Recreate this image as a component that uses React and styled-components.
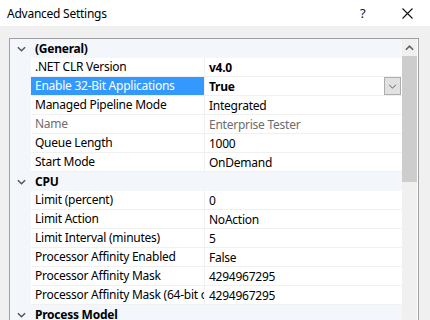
import React from 'react';
import styled, { createGlobalStyle } from 'styled-components';

const GlobalStyle = createGlobalStyle`
  html, body {
    margin: 0;
    padding: 0;
    width: 430px;
    height: 320px;
    overflow: hidden;
    background: #f0f0f0;
    font-family: "Noto Sans", "Open Sans", sans-serif;
    font-size: 12px;
    letter-spacing: -0.25px;
    color: #000;
  }
`;

const sections = [
  {
    title: '(General)',
    items: [
      { name: '.NET CLR Version', value: 'v4.0', bold: true },
      { name: 'Enable 32-Bit Applications', value: 'True', bold: true, selected: true },
      { name: 'Managed Pipeline Mode', value: 'Integrated' },
      { name: 'Name', value: 'Enterprise Tester', disabled: true },
      { name: 'Queue Length', value: '1000' },
      { name: 'Start Mode', value: 'OnDemand' },
    ],
  },
  {
    title: 'CPU',
    items: [
      { name: 'Limit (percent)', value: '0' },
      { name: 'Limit Action', value: 'NoAction' },
      { name: 'Limit Interval (minutes)', value: '5' },
      { name: 'Processor Affinity Enabled', value: 'False' },
      { name: 'Processor Affinity Mask', value: '4294967295' },
      { name: 'Processor Affinity Mask (64-bit option)', value: '4294967295' },
    ],
  },
  { title: 'Process Model', items: [] },
];

const Chevron = () => (
  <svg width="9" height="6" viewBox="0 0 10 6">
    <path d="M1 1 L5 5 L9 1" fill="none" stroke="#555" strokeWidth="1.6" />
  </svg>
);

const App = () => (
  <Window>
    <GlobalStyle />
    <TitleBar>
      <Title>Advanced Settings</Title>
      <Help>?</Help>
      <Close>
        <svg width="11" height="11" viewBox="0 0 11 11">
          <path d="M0.5 0.5 L10.5 10.5 M10.5 0.5 L0.5 10.5" stroke="#111" strokeWidth="1.1" />
        </svg>
      </Close>
    </TitleBar>
    <Body>
      <Grid>
        <Rows>
          {sections.map((s) => (
            <React.Fragment key={s.title}>
              <CategoryRow>
                <Margin>
                  <Chevron />
                </Margin>
                <CategoryTitle>{s.title}</CategoryTitle>
              </CategoryRow>
              {s.items.map((it) => (
                <PropRow key={it.name}>
                  <Margin />
                  <NameCell $selected={it.selected} $disabled={it.disabled}>
                    <NameText>{it.name}</NameText>
                  </NameCell>
                  <ValueCell $bold={it.bold} $disabled={it.disabled}>
                    <span>{it.value}</span>
                    {it.selected && (
                      <DropButton>
                        <svg width="9" height="5" viewBox="0 0 10 6">
                          <path d="M1 1 L5 5 L9 1" fill="none" stroke="#444" strokeWidth="1" />
                        </svg>
                      </DropButton>
                    )}
                  </ValueCell>
                </PropRow>
              ))}
            </React.Fragment>
          ))}
        </Rows>
        <ScrollBar>
          <ArrowUp>
            <svg width="9" height="6" viewBox="0 0 10 6">
              <path d="M1 5 L5 1 L9 5" fill="none" stroke="#606060" strokeWidth="1.8" />
            </svg>
          </ArrowUp>
          <Thumb />
        </ScrollBar>
      </Grid>
    </Body>
  </Window>
);

const Window = styled.div`
  display: flex;
  flex-direction: column;
  width: 430px;
  height: 320px;
  background: #f0f0f0;
`;

const TitleBar = styled.div`
  display: flex;
  align-items: center;
  height: 26px;
  background: #fff;
  padding-left: 7px;
`;

const Title = styled.div`
  flex: 1;
  font-size: 12px;
  color: #000;
`;

const Help = styled.div`
  width: 42px;
  font-size: 13px;
  color: #111;
`;

const Close = styled.div`
  width: 28px;
  display: flex;
  align-items: center;
`;

const Body = styled.div`
  flex: 1;
  padding: 12px 11px 0 9px;
  overflow: hidden;
`;

const Grid = styled.div`
  display: flex;
  border: 1px solid #a0a0a0;
  border-bottom: none;
  background: #fff;
  height: 300px;
`;

const Rows = styled.div`
  flex: 1;
  display: flex;
  flex-direction: column;
`;

const CategoryRow = styled.div`
  display: flex;
  height: 19px;
  flex-shrink: 0;
  background: #f3f6fb;
  align-items: center;
`;

const CategoryTitle = styled.div`
  font-weight: bold;
  padding-left: 4px;
`;

const PropRow = styled.div`
  display: grid;
  grid-template-columns: 21px 174px 1fr;
  height: 19px;
  flex-shrink: 0;
`;

const Margin = styled.div`
  width: 21px;
  height: 19px;
  background: #f3f6fb;
  display: flex;
  align-items: center;
  justify-content: center;
  flex-shrink: 0;
  box-sizing: border-box;
  padding-left: 2px;
`;

const NameCell = styled.div`
  box-sizing: border-box;
  padding-left: 4px;
  line-height: 18px;
  border-bottom: 1px solid #f0f0f0;
  border-right: 1px solid #f0f0f0;
  overflow: hidden;
  min-width: 0;
  background: ${(p) => (p.$selected ? '#3399ff' : '#fff')};
  color: ${(p) => (p.$selected ? '#fff' : p.$disabled ? '#6d6d6d' : '#000')};
`;

const NameText = styled.div`
  white-space: nowrap;
  overflow: hidden;
  text-overflow: clip;
`;

const ValueCell = styled.div`
  display: flex;
  align-items: center;
  justify-content: space-between;
  box-sizing: border-box;
  padding-left: 4px;
  border-bottom: 1px solid #f0f0f0;
  white-space: nowrap;
  font-weight: ${(p) => (p.$bold ? 'bold' : 'normal')};
  color: ${(p) => (p.$disabled ? '#6d6d6d' : '#000')};
`;

const DropButton = styled.div`
  width: 17px;
  height: 18px;
  box-sizing: border-box;
  border: 1px solid #adadad;
  background: #e1e1e1;
  display: flex;
  align-items: center;
  justify-content: center;
  margin-right: 1px;
`;

const ScrollBar = styled.div`
  width: 15px;
  background: #f0f0f0;
  display: flex;
  flex-direction: column;
  align-items: center;
  margin-right: 1px;
`;

const ArrowUp = styled.div`
  height: 17px;
  display: flex;
  align-items: center;
  justify-content: center;
`;

const Thumb = styled.div`
  width: 15px;
  height: 126px;
  background: #cdcdcd;
`;

export default App;
